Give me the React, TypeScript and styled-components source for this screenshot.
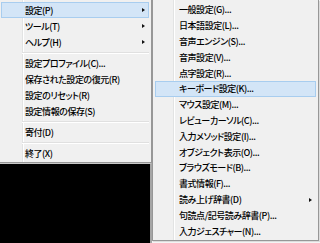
import React from 'react';
import styled, { createGlobalStyle } from 'styled-components';

const Global = createGlobalStyle`
  html, body { margin: 0; padding: 0; background: #f4f4f4; }
  body {
    width: 320px; height: 243px; overflow: hidden;
    font-family: "Noto Sans CJK JP", "Noto Sans", sans-serif;
  }
`;

const Screen = styled.div`
  display: flex;
  width: 320px;
  height: 243px;
  overflow: hidden;
`;

const LeftCol = styled.div`
  width: 152px;
  flex-shrink: 0;
  display: flex;
  flex-direction: column;
`;

const Menu = styled.div<{ $fill?: boolean }>`
  position: relative;
  box-sizing: border-box;
  background: #f0f0f0;
  border: 1px solid #979797;
  border-top: none;
  padding: 2px 2px 1px 2px;
  display: flex;
  flex-direction: column;
  ${(p) => (p.$fill ? 'height: 241px;' : '')}
`;

const LeftMenu = styled(Menu)`
  border-left: none;
  padding-left: 1px;
`;

const SubMenu = styled(Menu)`
  width: 167px;
  flex-shrink: 0;
  box-shadow: 1px 1px 0 #dcdcdc;
`;

const Gutter = styled.div<{ $x: number }>`
  position: absolute;
  top: 0;
  bottom: 0;
  left: ${(p) => p.$x}px;
  width: 1px;
  background: #e2e3e3;
  border-right: 1px solid #ffffff;
`;

const Item = styled.div<{ $hot?: boolean }>`
  position: relative;
  z-index: 1;
  box-sizing: border-box;
  height: 16px;
  display: flex;
  align-items: center;
  padding-left: 23px;
  font-size: 9px;
  font-weight: 500;
  font-feature-settings: "palt";
  letter-spacing: -0.45px;
  color: #000;
  white-space: nowrap;
  border: 1px solid ${(p) => (p.$hot ? '#a8cdef' : 'transparent')};
  background: ${(p) => (p.$hot ? '#d3e5f7' : 'transparent')};
`;

const Arrow = styled.span`
  position: absolute;
  right: 3px;
  top: 5px;
  width: 0;
  height: 0;
  border-top: 2.5px solid transparent;
  border-bottom: 2.5px solid transparent;
  border-left: 3px solid #111;
`;

const Sep = styled.div<{ $x: number }>`
  position: relative;
  z-index: 1;
  height: 5px;
  display: flex;
  align-items: center;
  padding-left: ${(p) => p.$x}px;
  &::after {
    content: '';
    flex: 1;
    height: 1px;
    background: #e0e0e0;
    border-bottom: 1px solid #ffffff;
  }
`;

const Black = styled.div`
  flex: 1;
  background: #000;
  border-right: 2px solid #a6a6a6;
  border-top: 1px solid #c8c8c8;
`;

type Entry = { label?: string; sub?: boolean; hot?: boolean; sep?: boolean };

const leftItems: Entry[] = [
  { label: '設定(P)', sub: true, hot: true },
  { label: 'ツール(T)', sub: true },
  { label: 'ヘルプ(H)', sub: true },
  { sep: true },
  { label: '設定プロファイル(C)...' },
  { label: '保存された設定の復元(R)' },
  { label: '設定のリセット(R)' },
  { label: '設定情報の保存(S)' },
  { sep: true },
  { label: '寄付(D)' },
  { sep: true },
  { label: '終了(X)' },
];

const subItems: Entry[] = [
  { label: '一般設定(G)...' },
  { label: '日本語設定(L)...' },
  { label: '音声エンジン(S)...' },
  { label: '音声設定(V)...' },
  { label: '点字設定(R)...' },
  { label: 'キーボード設定(K)...', hot: true },
  { label: 'マウス設定(M)...' },
  { label: 'レビューカーソル(C)...' },
  { label: '入力メソッド設定(I)...' },
  { label: 'オブジェクト表示(O)...' },
  { label: 'ブラウズモード(B)...' },
  { label: '書式情報(F)...' },
  { label: '読み上げ辞書(D)', sub: true },
  { label: '句読点/記号読み辞書(P)...' },
  { label: '入力ジェスチャー(N)...' },
];

function renderEntries(list: Entry[], sepX: number) {
  return list.map((e, i) =>
    e.sep ? (
      <Sep key={i} $x={sepX} />
    ) : (
      <Item key={i} $hot={e.hot}>
        {e.label}
        {e.sub && <Arrow />}
      </Item>
    )
  );
}

export default function App() {
  return (
    <>
      <Global />
      <Screen>
        <LeftCol>
          <LeftMenu>
            <Gutter $x={22} />
            {renderEntries(leftItems, 21)}
          </LeftMenu>
          <Black />
        </LeftCol>
        <SubMenu $fill>
          <Gutter $x={20} />
          {renderEntries(subItems, 20)}
        </SubMenu>
      </Screen>
    </>
  );
}
